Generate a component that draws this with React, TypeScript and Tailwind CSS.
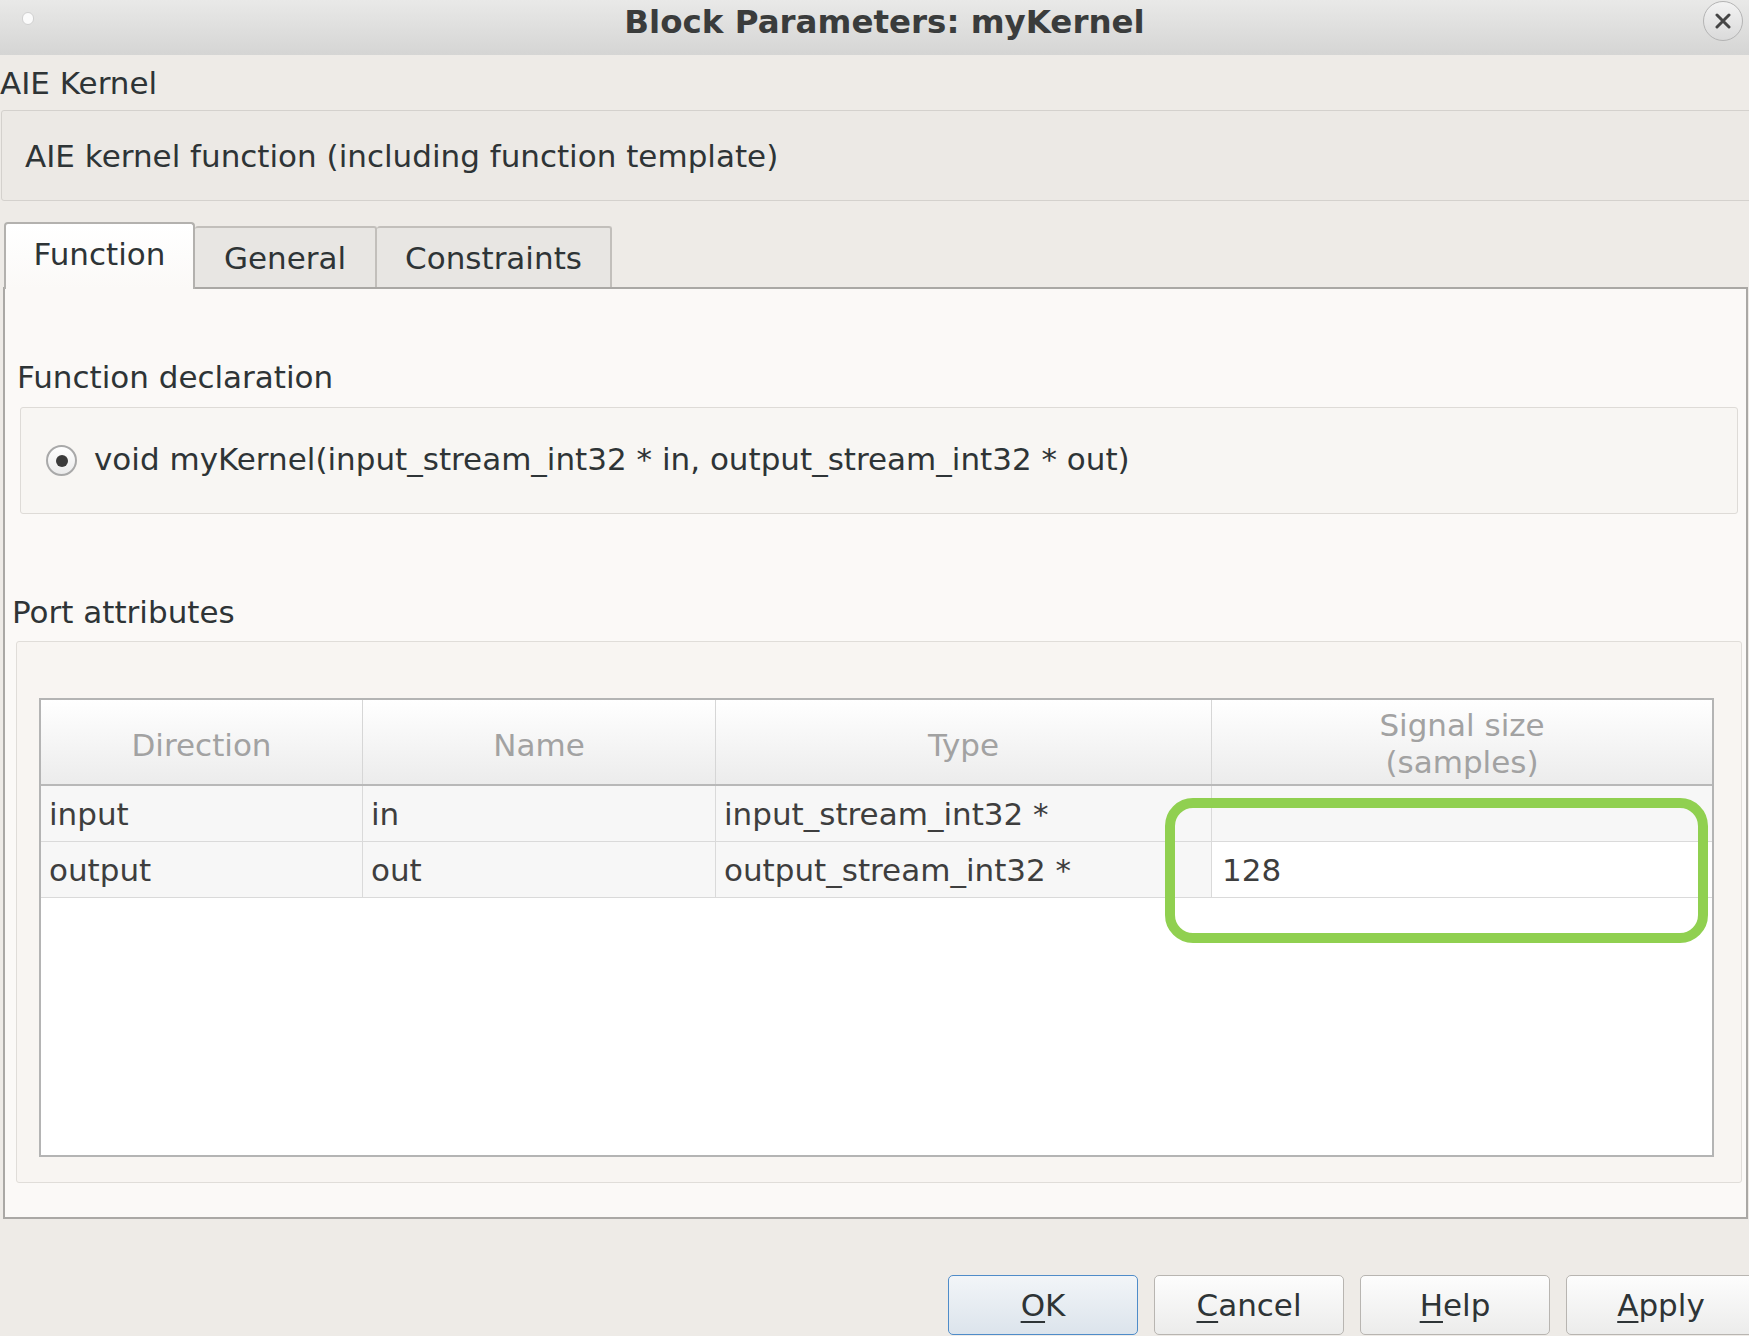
import React from "react";

const Btn = ({ label, primary }: { label: string; primary?: boolean }) => (
  <div
    className={
      "w-[190px] h-[60px] shrink-0 rounded-[5px] border flex items-center justify-center text-[31px] text-[#2e3436] " +
      (primary
        ? "border-[#4f8cc9] bg-gradient-to-b from-[#f2f5f8] to-[#dce4ec]"
        : "border-[#b8b5b1] bg-gradient-to-b from-[#fdfdfd] to-[#ececeb]")
    }
  >
    <span>
      <span className="underline underline-offset-[5px] decoration-[2px]">{label[0]}</span>
      {label.slice(1)}
    </span>
  </div>
);

const rows = [
  { dir: "input", name: "in", type: "input_stream_int32 *", size: "" },
  { dir: "output", name: "out", type: "output_stream_int32 *", size: "128" },
];

export default function App() {
  return (
    <div className="w-[1749px] h-[1336px] overflow-hidden bg-[#eeebe7] font-['DejaVu_Sans',sans-serif] text-[31px] leading-[36px] text-[#2e3436] flex flex-col">
      {/* Title bar */}
      <div className="relative h-[55px] shrink-0 bg-gradient-to-b from-[#e9e9e8] to-[#d5d5d4] flex items-center justify-center pl-[20px]">
        <div className="absolute left-[22px] top-[12px] w-[12px] h-[13px] rounded-full bg-[#fbfbfb] border border-[#d0d0d0]" />
        <span className="font-bold text-[32.5px] text-[#3a3c3c] -mt-[11px]">Block Parameters: myKernel</span>
        <div className="absolute right-[6px] top-[1px] w-[40px] h-[40px] rounded-full border border-[#b4b4b4] bg-gradient-to-b from-[#f3f3f3] to-[#dadada] flex items-center justify-center">
          <svg width="16" height="16" viewBox="0 0 16 16">
            <path d="M2 2 L14 14 M14 2 L2 14" stroke="#454545" strokeWidth="3" strokeLinecap="round" />
          </svg>
        </div>
      </div>

      {/* AIE Kernel label */}
      <div className="h-[55px] shrink-0 flex items-center">AIE Kernel</div>

      {/* Description box */}
      <div className="h-[91px] shrink-0 ml-[1px] -mr-[6px] border border-[#d4d1cd] rounded-[3px] bg-[#ece9e5] flex items-center pl-[23px]">
        AIE kernel function (including function template)
      </div>

      {/* Tabs */}
      <div className="mt-[21px] h-[65px] shrink-0 ml-[4px] flex items-end">
        <div className="w-[191px] h-[67px] rounded-t-[4px] border-2 border-b-0 border-[#b3b1ae] bg-gradient-to-b from-[#ffffff] to-[#fbf9f7] flex items-center justify-center pb-[6px] relative z-10 -mb-[2px]">
          Function
        </div>
        <div className="w-[182px] h-[61px] rounded-t-[3px] border-2 border-b-0 border-l-0 border-[#c2bfbb] bg-[#e8e6e3] flex items-center justify-center">
          General
        </div>
        <div className="w-[235px] h-[61px] rounded-t-[3px] border-2 border-b-0 border-l-0 border-[#c2bfbb] bg-[#e8e6e3] flex items-center justify-center">
          Constraints
        </div>
      </div>

      {/* Tab panel */}
      <div className="ml-[3px] mr-[1px] h-[932px] shrink-0 border-2 border-[#aaa8a5] bg-[#fbf9f7] flex flex-col">
        <div className="mt-[70px] pl-[12px] leading-[36px]">Function declaration</div>
        <div className="mt-[12px] ml-[15px] w-[1718px] h-[107px] border border-[#dedbd7] rounded-[3px] bg-[#f8f6f3] flex items-center">
          <div className="ml-[25px] w-[31px] h-[31px] rounded-full border-2 border-[#a9a9a9] bg-gradient-to-b from-[#ffffff] to-[#ebebeb] flex items-center justify-center">
            <div className="w-[12px] h-[12px] rounded-full bg-[#3b3b3b]" />
          </div>
          <span className="ml-[17px] -mt-[3px]">void myKernel(input_stream_int32 * in, output_stream_int32 * out)</span>
        </div>

        <div className="mt-[80px] pl-[7px] leading-[36px]">Port attributes</div>
        <div className="mt-[11px] ml-[11px] w-[1726px] h-[542px] border border-[#e0ddd9] rounded-[3px] bg-[#f8f5f2] flex flex-col">
          <div className="relative mt-[56px] ml-[22px] w-[1675px] h-[459px] border-2 border-[#b4b4b4] bg-white flex flex-col">
            {/* header */}
            <div className="h-[86px] shrink-0 flex border-b-2 border-[#b8b8b8] bg-gradient-to-b from-[#ffffff] to-[#ececec] text-[#a2a2a2]">
              <div className="w-[322px] shrink-0 border-r border-[#d6d6d6] flex items-center justify-center pt-[6px]">Direction</div>
              <div className="w-[353px] shrink-0 border-r border-[#d6d6d6] flex items-center justify-center pt-[6px]">Name</div>
              <div className="w-[496px] shrink-0 border-r border-[#d6d6d6] flex items-center justify-center pt-[6px]">Type</div>
              <div className="flex-1 flex flex-col items-center justify-center leading-[37px] pt-[4px]">
                <span>Signal size</span>
                <span>(samples)</span>
              </div>
            </div>
            {rows.map((r, i) => (
              <div key={i} className="h-[56px] shrink-0 flex border-b border-[#dadada] bg-[#f7f7f7] text-[#3e3e3e]">
                <div className="w-[322px] shrink-0 border-r border-[#dadada] flex items-center pl-[8px]">{r.dir}</div>
                <div className="w-[353px] shrink-0 border-r border-[#dadada] flex items-center pl-[8px]">{r.name}</div>
                <div className="w-[496px] shrink-0 border-r border-[#dadada] flex items-center pl-[8px]">{r.type}</div>
                <div className={"flex-1 flex items-center pl-[10px] " + (i === 1 ? "bg-white" : "")}>{r.size}</div>
              </div>
            ))}
            {/* highlight */}
            <div className="absolute left-[1124px] top-[98px] w-[543px] h-[145px] rounded-[28px] border-[10px] border-[#90d050]" />
          </div>
        </div>
      </div>

      {/* Footer buttons */}
      <div className="mt-[56px] flex justify-end gap-[16px] -mr-[7px]">
        <Btn label="OK" primary />
        <Btn label="Cancel" />
        <Btn label="Help" />
        <Btn label="Apply" />
      </div>
    </div>
  );
}
